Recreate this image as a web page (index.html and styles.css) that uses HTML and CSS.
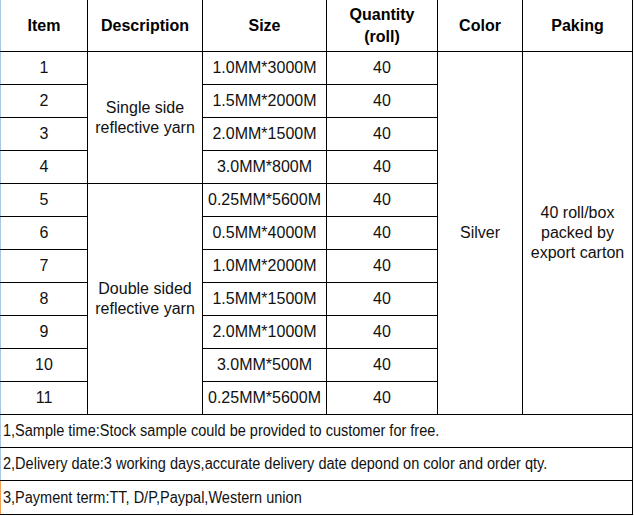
FILE: index.html
```html
<!DOCTYPE html>
<html>
<head>
<meta charset="utf-8">
<link rel="stylesheet" href="styles.css">
</head>
<body>
<table class="spec">
  <colgroup>
    <col class="c-item">
    <col class="c-desc">
    <col class="c-size">
    <col class="c-qty">
    <col class="c-color">
    <col class="c-pack">
  </colgroup>
  <thead>
    <tr class="head">
      <th class="first">Item</th>
      <th>Description</th>
      <th>Size</th>
      <th class="qty-head">Quantity<br>(roll)</th>
      <th>Color</th>
      <th class="last">Paking</th>
    </tr>
  </thead>
  <tbody>
    <tr><td class="first">1</td><td rowspan="4" class="desc">Single side<br>reflective yarn</td><td>1.0MM*3000M</td><td>40</td><td rowspan="11">Silver</td><td rowspan="11" class="last pack">40 roll/box<br>packed by<br>export carton</td></tr>
    <tr><td class="first">2</td><td>1.5MM*2000M</td><td>40</td></tr>
    <tr><td class="first">3</td><td>2.0MM*1500M</td><td>40</td></tr>
    <tr><td class="first">4</td><td>3.0MM*800M</td><td>40</td></tr>
    <tr><td class="first">5</td><td rowspan="7" class="desc">Double sided<br>reflective yarn</td><td>0.25MM*5600M</td><td>40</td></tr>
    <tr><td class="first">6</td><td>0.5MM*4000M</td><td>40</td></tr>
    <tr><td class="first">7</td><td>1.0MM*2000M</td><td>40</td></tr>
    <tr><td class="first">8</td><td>1.5MM*1500M</td><td>40</td></tr>
    <tr><td class="first">9</td><td>2.0MM*1000M</td><td>40</td></tr>
    <tr><td class="first">10</td><td>3.0MM*500M</td><td>40</td></tr>
    <tr><td class="first">11</td><td>0.25MM*5600M</td><td>40</td></tr>
    <tr><td colspan="6" class="note first last"><span class="narrow">1,Sample time:Stock sample could be provided to customer for free.</span></td></tr>
    <tr><td colspan="6" class="note first last"><span class="narrow">2,Delivery date:3 working days,accurate delivery date depond on color and order qty.</span></td></tr>
    <tr><td colspan="6" class="note first last orange"><span class="narrow">3,Payment term:TT, D/P,Paypal,Western union</span></td></tr>
  </tbody>
</table>
</body>
</html>
```
FILE: styles.css
```css
html, body {
  margin: 0;
  padding: 0;
  background: #ffffff;
}

.spec {
  border-collapse: collapse;
  table-layout: fixed;
  width: 632px;
  font-family: "Liberation Sans", Arial, sans-serif;
  font-size: 16px;
  color: #111111;
}

.c-item { width: 87px; }
.c-desc { width: 115px; }
.c-size { width: 124px; }
.c-qty { width: 111px; }
.c-color { width: 85px; }
.c-pack { width: 110px; }

.spec th,
.spec td {
  border: 1px solid #000000;
  padding: 0;
  text-align: center;
  vertical-align: middle;
  line-height: 20px;
  height: 32px;
}

.spec th {
  border-top: none;
  height: 51px;
  font-weight: bold;
  color: #000000;
  line-height: 22px;
}

.spec .first {
  border-left: 1px solid #a9c6e3;
}

.spec .last {
  border-right: 1px solid #000000;
}

.desc {
  line-height: 20px;
}

.pack {
  line-height: 19px;
}

.spec td.note {
  text-align: left;
  padding-left: 2px;
  white-space: nowrap;
  height: 32px;
}

.spec td.orange {
  border-left-color: #f0a050;
  height: 33px;
}

.narrow {
  display: inline-block;
  transform: scaleX(0.907);
  transform-origin: left center;
}
```
